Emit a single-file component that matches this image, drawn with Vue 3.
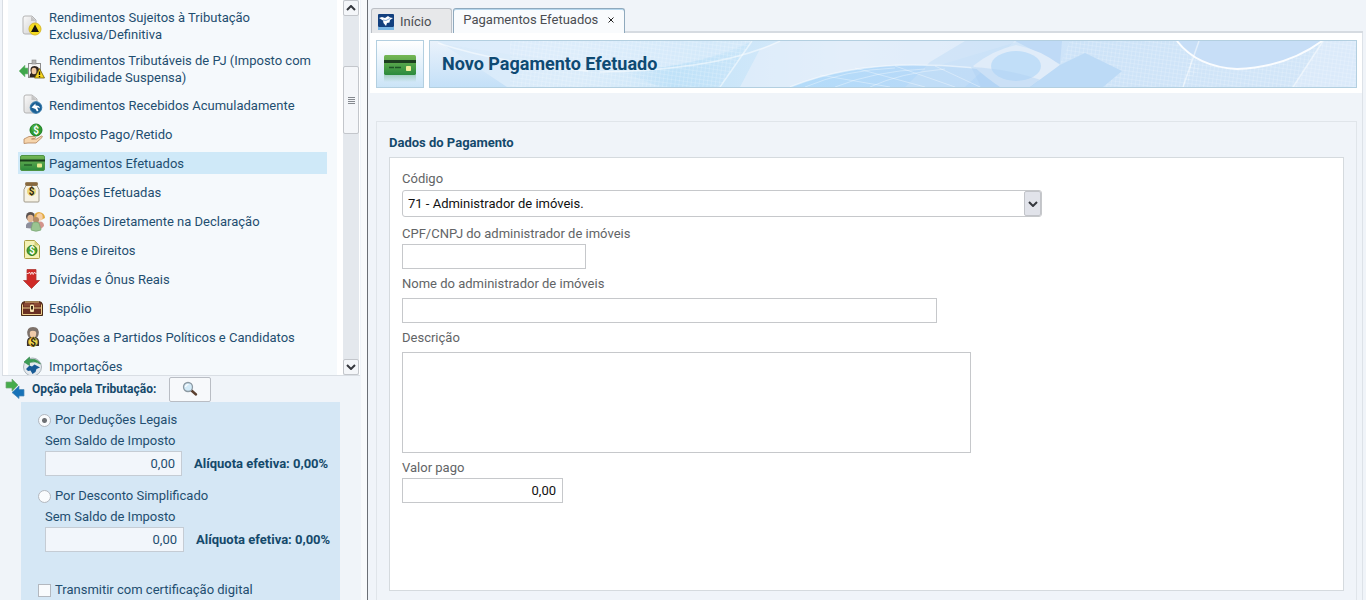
<template>
    <div class="app">
        <aside class="sidebar">
            <div class="list-area">
                <nav class="menu">
                    <a v-for="item in items" :key="item.icon" href="#" class="item" :class="{ active: item.active }">
                        <svg class="icon" viewBox="0 0 26 22" aria-hidden="true">
                            <g v-if="item.icon === 'exclusive'">
                                <path d="M6 1h7l4 4v14H6q-2 0-2-2V3q0-2 2-2z" fill="url(#paper)" stroke="#b4b4b4" />
                                <path d="M12 1v5h5z" fill="#c4c4c4" />
                                <circle cx="16" cy="14" r="6" fill="#f4dc20" stroke="#d8b92a" />
                                <path d="M16 9.500l4 7.500h-8z" fill="#18160c" />
                            </g>
                            <g v-else-if="item.icon === 'suspended'">
                                <path d="M0 13l6-6v3h3v6H6v3z" fill="#3fa74c" stroke="#8ac58e" stroke-width=".6" />
                                <rect x="9.500" y="5.500" width="12" height="14" fill="#f6f6f6" stroke="#8c8c8c" />
                                <rect x="13" y="2" width="4" height="4" fill="#b5b5b5" stroke="#888" stroke-width=".6" />
                                <path d="M10.500 19q0-3 1.500-4-2-7 3.500-7t4.500 6v5z" fill="#30251f" />
                                <ellipse cx="15" cy="13" rx="2.500" ry="3.200" fill="#f0c9a2" />
                                <path d="M20.500 10.500l5 9.500h-10z" fill="#f8d61d" stroke="#6d5a0b" stroke-width=".8" />
                                <path d="M20.500 13.500v3.500M20.500 18v1.200" stroke="#151515" stroke-width="1.400" />
                            </g>
                            <g v-else-if="item.icon === 'accumulated'">
                                <path d="M7 1h6l5 4v14H7q-2 0-2-2V3q0-2 2-2z" fill="url(#paper)" stroke="#b4b4b4" />
                                <path d="M12.500 1v5h5z" fill="#c4c4c4" />
                                <circle cx="17" cy="13.500" r="5.800" fill="#1c5f93" stroke="#2f77aa" />
                                <path d="M12.500 13.500l4-4v2q4-.5 4.500 3-1.500-1.500-3-1l1.500 3-1.500 1-1.500-2.500z" fill="#fff" />
                            </g>
                            <g v-else-if="item.icon === 'paid'">
                                <circle cx="17" cy="7" r="6" fill="#2f9a31" stroke="#187d20" />
                                <circle cx="16" cy="5" r="3.500" fill="#58b94a" opacity=".6" />
                                <text x="17" y="10.500" class="money light">$</text>
                                <path d="M5 16l5-2.500h6q1.500 1-.5 2l-3 .5h5l5-3q1.500 0 .500 1.500l-6 5.500H9l-4 .500z" fill="#f6d5ac" stroke="#b3845a" stroke-width=".8" />
                            </g>
                            <g v-else-if="item.icon === 'card'">
                                <rect x="1.500" y="3.500" width="24" height="15" rx="1.500" fill="url(#cardGreen)" stroke="#4d9444" />
                                <path d="M1 8.500h25" stroke="#183c1b" stroke-width="2" />
                                <path d="M5 13h8" stroke="#1d5323" stroke-width="1.200" />
                                <rect x="18" y="11.500" width="5" height="4" rx=".8" fill="#e6ea8e" />
                            </g>
                            <g v-else-if="item.icon === 'bag'">
                                <path d="M7 4.500h11l2 4v11.500q0 1-1 1H6q-1 0-1-1V8.500z" fill="#f6f2e4" stroke="#a09a8a" />
                                <rect x="6.500" y="1.500" width="12" height="3" rx=".8" fill="#87683e" stroke="#8a7048" stroke-width=".8" />
                                <circle cx="12.500" cy="10.500" r="4.500" fill="#ecd77a" />
                                <text x="12.500" y="14" class="money">$</text>
                            </g>
                            <g v-else-if="item.icon === 'people'">
                                <circle cx="11.500" cy="6.500" r="4.500" fill="#5b5350" />
                                <ellipse cx="11.500" cy="8.500" rx="3.200" ry="3.700" fill="#e3b894" />
                                <path d="M7 18v-3q1-3 5-3 4 0 4 3v4z" fill="#8d8f9c" />
                                <path d="M15 8q0-6 5-6 6 1 6 6l-4 2z" fill="#e3ab42" />
                                <ellipse cx="20.500" cy="7" rx="3.200" ry="3.800" fill="#f6cfa6" />
                                <path d="M18 12q7-2 7 4l-3 3z" fill="#d3948b" />
                                <circle cx="17" cy="10" r="3" fill="#b48b66" />
                                <path d="M12 20l1.500-7q3.500-2 6.500 0l2 7q-5 2.500-10 0z" fill="#9ac491" stroke="#78a573" stroke-width=".7" />
                            </g>
                            <g v-else-if="item.icon === 'goods'">
                                <path d="M6.500 1.500h9l5 5v12q0 1-1 1h-13q-1 0-1-1v-16q0-1 1-1z" fill="#f5f2b4" stroke="#a89d43" />
                                <path d="M15.500 1.500v5h5z" fill="#d4cd79" />
                                <circle cx="13" cy="11.500" r="5" fill="#49a12d" stroke="#2e7a20" />
                                <text x="13" y="15" class="money light">$</text>
                            </g>
                            <g v-else-if="item.icon === 'debts'">
                                <path d="M8 1.500h9v11h3.500L12.500 20.500 4.500 12.500H8z" fill="#cf2a27" stroke="#b03a35" stroke-width=".8" />
                                <path d="M7.500 5.500h2l1-1.500 1.200 2.500L13 4l1.200 2.500L15.500 4l1 1.500h1" fill="none" stroke="#fff" stroke-width=".8" />
                            </g>
                            <g v-else-if="item.icon === 'chest'">
                                <path d="M2.500 18.500V8q0-3.500 4-3.500h13q4 0 4 3.500v10.500z" fill="#6a3022" stroke="#4a2b17" />
                                <path d="M5 9.500V7q0-1 1.500-1H11v3.500zM15 9.500V6h4.500Q21 6 21 7v2.500z" fill="#8a4a34" />
                                <path d="M3 11h20M3.500 17.500h19M6 5h14" stroke="#edcf8d" stroke-width="1.200" />
                                <path d="M3.500 7.500v10M22.500 7.500v10" stroke="#edcf8d" />
                                <rect x="11" y="7.500" width="4" height="7.500" rx="1" fill="#f5e3ac" />
                                <path d="M13 9v3.500" stroke="#24160b" stroke-width="1.800" />
                            </g>
                            <g v-else-if="item.icon === 'candidate'">
                                <path d="M8 20q-1-8 3-9h6q4 1 3 9z" fill="#3c3330" />
                                <path d="M8.500 9Q7 1 14 1t5.500 8l-1 2h-9z" fill="#7d726b" />
                                <ellipse cx="14" cy="7.500" rx="3.200" ry="4.200" fill="#f0cba9" />
                                <path d="M10.500 6q3-2.500 7 0l-1-3.500h-5z" fill="#7d726b" />
                                <circle cx="14" cy="16" r="4.500" fill="#f6dc50" stroke="#b4932a" />
                                <text x="14" y="19.500" class="money">$</text>
                            </g>
                            <g v-else>
                                <circle cx="13.500" cy="12" r="9" fill="#e4e9ed" stroke="#aab3ba" />
                                <path d="M7 14l3.500-3.500 2.500 1 2.500-2 5.500 3-3.500 1.500-1 3-3 2-2-3.500-2.500.5z" fill="#175a95" />
                                <path d="M21.500 9Q18 3 10.500 4.500V2L5 7l5.500 3.500V7.500Q16 5.500 21.500 9z" fill="#3c9d55" stroke="#2c8144" stroke-width=".6" />
                            </g>
                        </svg>
                        <span class="item-text">{{ item.text }}</span>
                    </a>
                </nav>
                <div class="scrollbar">
                    <button class="scroll-button" aria-label="Rolar para cima">
                        <svg viewBox="0 0 10 6" class="chevron"><path d="M1 5l4-4 4 4" /></svg>
                    </button>
                    <div class="track">
                        <div class="thumb"><i></i><i></i><i></i><i></i></div>
                    </div>
                    <button class="scroll-button" aria-label="Rolar para baixo">
                        <svg viewBox="0 0 10 6" class="chevron"><path d="M1 1l4 4 4-4" /></svg>
                    </button>
                </div>
            </div>

            <section class="taxation">
                <div class="taxation-head">
                    <svg class="arrows" viewBox="0 0 20 20" aria-hidden="true">
                        <path d="M1 3h6V0l6 6-6 6V9H1z" fill="#46ac4c" stroke="#75a678" stroke-width=".7" />
                        <path d="M19 10.500h-5V7l-7 6.500 7 6V17h5z" fill="#1772b8" stroke="#4a86b4" stroke-width=".7" />
                    </svg>
                    <h2 class="taxation-title">Opção pela Tributação:</h2>
                    <button class="search" aria-label="Comparar opções">
                        <svg viewBox="0 0 16 16" class="lens">
                            <path d="M9.500 9.500l4.500 4" stroke="#5b402f" stroke-width="2.400" stroke-linecap="round" />
                            <circle cx="6" cy="6" r="4.500" fill="#d3ebf8" stroke="#8d9aa3" stroke-width="1.300" />
                            <path d="M3.500 6Q4 3.500 6.500 3.500" fill="none" stroke="#fff" stroke-width="1.200" />
                        </svg>
                    </button>
                </div>
                <div class="options">
                    <template v-for="option in options" :key="option.id">
                        <label class="check">
                            <input v-model="selected" type="radio" name="option" :value="option.id">{{ option.text }}
                        </label>
                        <label class="balance-label" :for="option.id">Sem Saldo de Imposto</label>
                        <div class="balance">
                            <input :id="option.id" class="amount" :class="option.id" type="text" value="0,00" readonly>
                            <strong>Alíquota efetiva: 0,00%</strong>
                        </div>
                    </template>
                    <label class="check certificate"><input type="checkbox">Transmitir com certificação digital</label>
                </div>
            </section>
        </aside>

        <main class="main">
            <div class="tabs">
                <button class="tab">
                    <svg viewBox="0 0 16 16" class="tab-icon" aria-hidden="true">
                        <rect width="16" height="13" rx="1" fill="#123f7e" />
                        <rect y="13" width="16" height="3" fill="#78b5e4" />
                        <path d="M1 4l3-1 3 1 3-2 2 1.500 3 .5-3 2-.5 2.500L9 9l-1 3-2.500-3L5 6.500z" fill="#fff" />
                        <path d="M5 6l3 .5 4-2" fill="none" stroke="#6d9bcb" stroke-width=".8" />
                    </svg>
                    Início
                </button>
                <button class="tab current">
                    Pagamentos Efetuados
                    <svg viewBox="0 0 6 6" class="close"><path d="M.5.500l5 5m0-5l-5 5" /></svg>
                </button>
                <div class="tabs-rest"></div>
            </div>

            <div class="page">
                <header class="header">
                    <div class="header-icon">
                        <svg viewBox="0 0 34 28" class="header-card" aria-hidden="true">
                            <defs>
                                <linearGradient id="cardGreen" x2="0" y2="1">
                                    <stop offset="0" stop-color="#75b755" />
                                    <stop offset="1" stop-color="#2b8a3c" />
                                </linearGradient>
                                <linearGradient id="paper" x2="1" y2="1">
                                    <stop offset="0" stop-color="#fafafa" />
                                    <stop offset="1" stop-color="#cfcfcf" />
                                </linearGradient>
                                <linearGradient id="reflection" x2="0" y2="1">
                                    <stop offset="0" stop-color="#5da576" stop-opacity=".4" />
                                    <stop offset="1" stop-color="#5da576" stop-opacity="0" />
                                </linearGradient>
                            </defs>
                            <rect x="1" y="1" width="32" height="20" rx="1.500" fill="url(#cardGreen)" />
                            <rect x="1" y="6" width="32" height="3" fill="#1d3e20" />
                            <path d="M6 13.500h5m1 0h6" stroke="#1e5426" stroke-width="1.600" />
                            <rect x="23" y="12" width="5" height="5" rx=".8" fill="#f1ee9b" />
                            <rect x="1" y="21" width="32" height="7" fill="url(#reflection)" />
                        </svg>
                    </div>
                    <div class="banner">
                        <svg class="banner-art" viewBox="0 0 926 46" preserveAspectRatio="none" aria-hidden="true">
                            <defs>
                                <linearGradient id="sky">
                                    <stop offset="0" stop-color="#d9eafa" />
                                    <stop offset=".16" stop-color="#dbecfa" />
                                    <stop offset=".3" stop-color="#c8e5f9" />
                                    <stop offset=".45" stop-color="#dcebfa" />
                                    <stop offset=".7" stop-color="#cde3f8" />
                                    <stop offset="1" stop-color="#d3e6f8" />
                                </linearGradient>
                                <linearGradient id="fade" x2="0" y2="1">
                                    <stop offset="0" stop-color="#eaf2fb" />
                                    <stop offset="1" stop-color="#c4e0f8" />
                                </linearGradient>
                                <linearGradient id="dome">
                                    <stop offset="0" stop-color="#b4dcfa" />
                                    <stop offset="1" stop-color="#b9d6f6" />
                                </linearGradient>
                                <linearGradient id="valley">
                                    <stop offset="0" stop-color="#b9dff8" stop-opacity="0" />
                                    <stop offset=".4" stop-color="#b9dff8" stop-opacity=".7" />
                                    <stop offset="1" stop-color="#c8e5f9" stop-opacity=".5" />
                                </linearGradient>
                                <pattern id="mesh" width="4" height="4" patternUnits="userSpaceOnUse" patternTransform="rotate(8)">
                                    <path d="M0 .5h4M.5 0v4" stroke="#fff" stroke-opacity=".16" />
                                </pattern>
                            </defs>
                            <rect width="926" height="46" fill="url(#sky)" />
                            <path d="M0 0h8l69 46H0z" fill="url(#fade)" />
                            <path d="M8 2q100 18 200 27 50-4 95-18L322 0H8z" fill="#e0eefb" opacity=".5" />
                            <path d="M190 30q80-4 132-30L290 46h-60z" fill="url(#valley)" />
                            <path d="M80 0h242l-32 46H80z" fill="url(#mesh)" />
                            <path d="M350 0h240l-80 24q-70-4-150 22h-50l20-38z" fill="#e7f0fa" opacity=".6" />
                            <path d="M170 31q120-2 180-31M8 2q60 20 150 28" class="glow" />
                            <path d="M322 0l-32 46" class="glow" />
                            <path d="M360 46q55-22 123-22 90 0 145 22z" fill="url(#dome)" />
                            <path d="M535 0h50l-50 46h-60l25-25z" fill="#c7dff7" opacity=".6" />
                            <path d="M375 46q40-17 90-19M405 46q40-16 90-18M440 46q30-14 75-18M390 34l70 12M425 27l70 19M465 25l60 21M505 25l45 21" class="thread" />
                            <path d="M360 46q55-22 123-22 90 0 145 22" class="glow" />
                            <path d="M585 0h47l-2 23z" fill="#bfdaf6" />
                            <path d="M586 4q25 5 44 20l-30 22h-30q-12-8-27-21 20-16 43-21z" fill="#e0ecf9" />
                            <ellipse cx="586" cy="25" rx="25" ry="15" fill="#c1def8" />
                            <path d="M541 26q46 2 88 20h-78z" fill="#adcff3" opacity=".4" />
                            <path d="M640 0h107q20 26 22 28l-16 18h-80l19-16-37-18-25 11z" fill="url(#mesh)" />
                            <path d="M655 12l37 18-19 16h-73l30-22z" fill="#bcdaf6" />
                            <path d="M747 0q20 26 60 28 50-2 85-28z" fill="#c7def7" />
                            <path d="M760 14q20 14 47 14 45-2 86-28l-30 46H753z" fill="url(#mesh)" />
                            <path d="M893 0h33v46h-63z" fill="#dbeafa" />
                            <path d="M893 0h33v46h-63z" fill="url(#mesh)" />
                            <path d="M747 0q20 26 60 28 50-2 85-28" class="glow strong" />
                            <path d="M769 0l-16 46M893 0l-30 46" class="glow" />
                        </svg>
                        <h1 class="title">Novo Pagamento Efetuado</h1>
                    </div>
                </header>

                <section class="payment">
                    <h2 class="payment-title">Dados do Pagamento</h2>
                    <form class="panel" @submit.prevent>
                        <label for="code">Código</label>
                        <div class="combo">
                            <select id="code">
                                <option>71 - Administrador de imóveis.</option>
                            </select>
                            <span class="combo-arrow">
                                <svg viewBox="0 0 10 6" class="chevron"><path d="M1 1l4 4 4-4" /></svg>
                            </span>
                        </div>
                        <label for="document">CPF/CNPJ do administrador de imóveis</label>
                        <input id="document" class="field document" type="text">
                        <label for="name">Nome do administrador de imóveis</label>
                        <input id="name" class="field name" type="text">
                        <label for="description">Descrição</label>
                        <textarea id="description" class="field description"></textarea>
                        <label for="value">Valor pago</label>
                        <input id="value" class="field value" type="text" value="0,00">
                    </form>
                </section>
            </div>
        </main>
    </div>
</template>

<script setup>
    import { ref } from 'vue';

    const items = [
        { icon: 'exclusive', text: 'Rendimentos Sujeitos à Tributação Exclusiva/Definitiva' },
        { icon: 'suspended', text: 'Rendimentos Tributáveis de PJ (Imposto com Exigibilidade Suspensa)' },
        { icon: 'accumulated', text: 'Rendimentos Recebidos Acumuladamente' },
        { icon: 'paid', text: 'Imposto Pago/Retido' },
        { icon: 'card', text: 'Pagamentos Efetuados', active: true },
        { icon: 'bag', text: 'Doações Efetuadas' },
        { icon: 'people', text: 'Doações Diretamente na Declaração' },
        { icon: 'goods', text: 'Bens e Direitos' },
        { icon: 'debts', text: 'Dívidas e Ônus Reais' },
        { icon: 'chest', text: 'Espólio' },
        { icon: 'candidate', text: 'Doações a Partidos Políticos e Candidatos' },
        { icon: 'imports', text: 'Importações' },
    ];

    const options = [
        { id: 'legal', text: 'Por Deduções Legais' },
        { id: 'simplified', text: 'Por Desconto Simplificado' },
    ];
    const selected = ref('legal');
</script>

<style>
    body {
        background: #f0f4f9;
        overflow: hidden;
    }
</style>

<style scoped>
    * {
        box-sizing: border-box;
    }

    .app {
        display: flex;
        height: 100vh;
        font-family: Roboto, 'Liberation Sans', sans-serif;
        font-size: 13px;
        line-height: 18px;
        color: #1f4e70;
    }

    button, input, select, textarea {
        font: inherit;
        color: inherit;
        margin: 0;
    }

    /* menu lateral */
    .sidebar {
        display: flex;
        flex-direction: column;
        flex: none;
        width: 368px;
        border-right: 1px solid #6b6f76;
        box-shadow: inset -6px 0 #f8fafc;
    }

    .list-area {
        display: flex;
        flex: 1;
        min-height: 0;
        overflow: hidden;
        width: 358px;
        margin-left: 2px;
        border-left: 1px solid #d9dee4;
        border-bottom: 1px solid #d9dee4;
        background: #fff;
    }

    .menu {
        display: flex;
        flex-direction: column;
        flex: 1;
        gap: 7px;
        margin-left: 5px;
        padding: 8px 10px 0;
        background: #f5f9fc;
    }

    .item {
        display: flex;
        flex: none;
        align-items: center;
        gap: 4px;
        min-height: 22px;
        padding: 1px;
        line-height: 17px;
        color: #1f4e70;
        text-decoration: none;
    }

    .item.active {
        background: #cfe9f8;
    }

    .icon {
        flex: none;
        width: 26px;
        height: 22px;
        margin: -1px 0;
    }

    .money {
        font-size: 10px;
        font-weight: 700;
        text-anchor: middle;
        fill: #2b2410;
    }

    .money.light {
        fill: #fff;
    }

    .scrollbar {
        display: flex;
        flex-direction: column;
        width: 16px;
        margin: 0 1px 0 6px;
        background: #e4e8ed;
    }

    .scroll-button {
        display: flex;
        flex: none;
        align-items: center;
        justify-content: center;
        height: 16px;
        padding: 0;
        border: 1px solid #c3c6cb;
        border-radius: 2px;
        background: #f4f6f9;
    }

    .chevron {
        width: 10px;
        height: 6px;
        fill: none;
        stroke: #34373d;
        stroke-width: 2;
    }

    .track {
        flex: 1;
        padding-top: 50px;
    }

    .thumb {
        display: flex;
        flex-direction: column;
        align-items: center;
        justify-content: center;
        gap: 1px;
        height: 68px;
        border: 1px solid #c3c6cb;
        border-radius: 2px;
        background: #f4f6f9;
    }

    .thumb i {
        width: 7px;
        height: 1px;
        background: #85898f;
    }

    /* opção pela tributação */
    .taxation-head {
        display: flex;
        align-items: center;
        height: 26px;
        padding-left: 5px;
    }

    .arrows {
        width: 20px;
        height: 20px;
    }

    .taxation-title {
        margin: 0 13px 0 7px;
        font-size: 12px;
        font-weight: 700;
        color: #14496b;
    }

    .search {
        display: flex;
        align-items: center;
        justify-content: center;
        width: 42px;
        height: 25px;
        padding: 0;
        border: 1px solid #b9bdc4;
        border-radius: 2px;
        background: #f7f9fb;
    }

    .lens {
        width: 16px;
        height: 16px;
        fill: none;
    }

    .options {
        width: 319px;
        margin-left: 21px;
        padding: 8px 0 0 17px;
        background: #d5e7f5;
    }

    .check {
        display: flex;
        align-items: center;
        gap: 4px;
        height: 20px;
        margin-bottom: 1px;
    }

    .check input {
        appearance: none;
        width: 13px;
        height: 13px;
        border: 1px solid #b3b8bf;
        background: #f9fbfd;
    }

    .check input[type='radio'] {
        border-radius: 50%;
    }

    .check input[type='radio']:checked {
        background: radial-gradient(circle, #6e7175 2px, #f9fbfd 3px);
    }

    .certificate {
        margin: 28px 0 0;
    }

    .balance-label {
        display: block;
        height: 20px;
        margin-left: 7px;
        line-height: 20px;
    }

    .balance {
        display: flex;
        align-items: center;
        gap: 12px;
        margin: 0 0 10px 7px;
    }

    .balance strong {
        color: #14496b;
    }

    .amount {
        width: 137px;
        height: 25px;
        padding: 0 6px;
        border: 1px solid #c5ccd4;
        background: #f2f6fb;
        text-align: right;
    }

    .amount.simplified {
        width: 139px;
    }

    /* área principal */
    .main {
        display: flex;
        flex-direction: column;
        flex: 1;
        min-width: 0;
        padding: 8px 3px 0 2px;
    }

    .tabs {
        display: flex;
        flex: none;
        height: 25px;
        padding-left: 1px;
    }

    .tab {
        display: flex;
        align-items: center;
        gap: 6px;
        height: 25px;
        padding: 2px 20px 0 6px;
        border: 1px solid #bcc0c6;
        border-bottom: none;
        border-radius: 3px 3px 0 0;
        background: #e7e8ea;
        color: #4a4d52;
    }

    .tab.current {
        gap: 10px;
        margin-left: 1px;
        padding: 0 10px 2px 9px;
        border-color: #8fa9bd;
        box-shadow: inset 0 1px #b5d7ee;
        background: #f9fbfd;
    }

    .tab-icon {
        width: 16px;
        height: 16px;
    }

    .close {
        width: 6px;
        height: 6px;
        fill: none;
        stroke: #222;
    }

    .tabs-rest {
        flex: 1;
        border-bottom: 2px solid #d6dbe1;
    }

    .page {
        display: flex;
        flex-direction: column;
        flex: 1;
        min-height: 0;
        border-right: 1px solid #dde2e8;
    }

    .header {
        display: flex;
        gap: 5px;
        margin-bottom: 28px;
        padding: 7px 5px 5px 6px;
        background: #fff;
    }

    .header-icon {
        display: flex;
        align-items: center;
        justify-content: center;
        width: 48px;
        height: 48px;
        border: 1px solid #b3cfe0;
        background: linear-gradient(#fff, #cbe4f7);
    }

    .header-card {
        width: 34px;
        height: 28px;
        margin-top: 8px;
    }

    .banner {
        display: flex;
        position: relative;
        flex: 1;
        align-items: center;
        border: 1px solid #b3cfe0;
    }

    .banner-art {
        position: absolute;
        width: 100%;
        height: 100%;
    }

    .glow {
        fill: none;
        stroke: #fff;
        stroke-opacity: .5;
        stroke-width: 1.5;
    }

    .glow.strong {
        stroke-opacity: .9;
        stroke-width: 2;
    }

    .thread {
        fill: none;
        stroke: #fff;
        stroke-opacity: .35;
    }

    .title {
        position: relative;
        margin: 0 0 0 12px;
        font-size: 18px;
        line-height: 24px;
        font-weight: 700;
        color: #0e4a73;
    }

    .payment {
        display: flex;
        flex-direction: column;
        flex: 1;
        margin: 0 5px 0 6px;
        padding: 12px 12px 9px;
        border: 1px solid #e0e5ea;
        border-bottom: none;
    }

    .payment-title {
        margin: 0 0 5px;
        font-size: 13px;
        font-weight: 700;
        color: #14496b;
    }

    .panel {
        flex: 1;
        padding: 12px;
        border: 1px solid #d5dade;
        background: #fff;
        color: #626466;
    }

    .panel label {
        display: block;
        margin-bottom: 1px;
    }

    .combo {
        display: flex;
        position: relative;
        width: 640px;
        max-width: 100%;
        margin: 2px 0 8px;
    }

    .combo select {
        appearance: none;
        flex: 1;
        height: 27px;
        padding: 0 5px;
        border: 1px solid #c6c8cb;
        border-radius: 3px;
        background: #fff;
        color: #111;
    }

    .combo-arrow {
        display: flex;
        position: absolute;
        top: 1px;
        right: 1px;
        align-items: center;
        justify-content: center;
        width: 17px;
        height: 25px;
        border: 1px solid #c2c4c9;
        border-radius: 2px;
        background: #e1e3ea;
        pointer-events: none;
    }

    .field {
        display: block;
        max-width: 100%;
        height: 25px;
        margin-bottom: 6px;
        padding: 0 6px;
        border: 1px solid #c6c8cb;
        background: #fff;
        color: #111;
    }

    .document {
        width: 184px;
    }

    .panel .name {
        width: 535px;
        margin-top: 5px;
    }

    .panel .description {
        width: 569px;
        height: 101px;
        margin-top: 5px;
        resize: none;
    }

    .value {
        width: 161px;
        text-align: right;
    }
</style>
